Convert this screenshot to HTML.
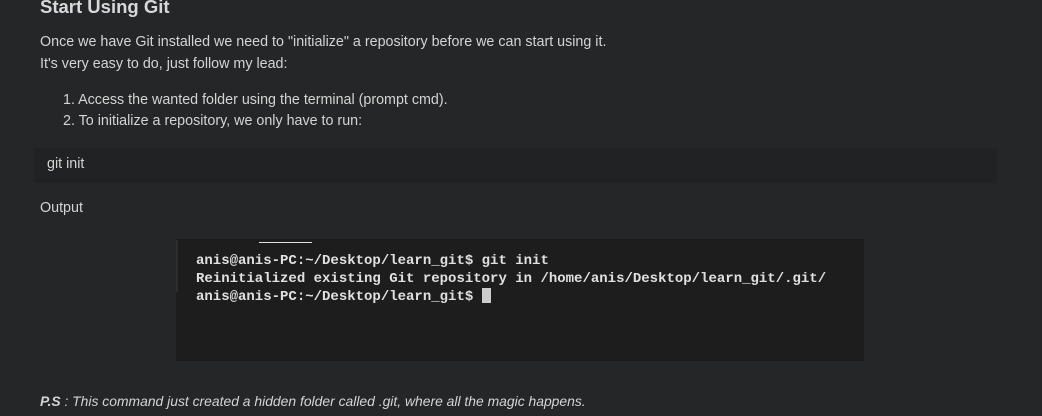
<!DOCTYPE html>
<html><head><style>
body{margin:0;background:#252627;width:1042px;height:416px;overflow:hidden;font-family:"Liberation Sans",sans-serif;color:#d4d4d4;position:relative}
.a{position:absolute;white-space:nowrap;font-size:14.3px}
</style></head><body>
<div class="a" style="left:40px;top:-4px;font-size:18.5px;font-weight:bold;color:#d8d8d8">Start Using Git</div>
<div class="a" style="left:40px;top:34px">Once we have Git installed we need to "initialize" a repository before we can start using it.</div>
<div class="a" style="left:40px;top:56px">It's very easy to do, just follow my lead:</div>
<div class="a" style="left:63px;top:92px">1. Access the wanted folder using the terminal (prompt cmd).</div>
<div class="a" style="left:63px;top:113px">2. To initialize a repository, we only have to run:</div>
<div style="position:absolute;left:34px;top:148px;width:963px;height:35px;background:#212223"></div>
<div class="a" style="left:47px;top:156px">git init</div>
<div class="a" style="left:40px;top:200px">Output</div>
<div style="position:absolute;left:176px;top:239px;width:688px;height:122px;background:#1d1d1e"></div>
<div style="position:absolute;left:176px;top:240px;width:2px;height:52px;background:#2c2c2c"></div>
<div style="position:absolute;left:259px;top:242px;width:53px;height:1px;background:#e0e0e0"></div>
<pre style="position:absolute;left:196px;top:253px;margin:0;font-family:'Liberation Mono',monospace;font-weight:bold;font-size:14px;line-height:17.5px;color:#e0e0e0">anis@anis-PC:~/Desktop/learn_git$ git init
Reinitialized existing Git repository in /home/anis/Desktop/learn_git/.git/
anis@anis-PC:~/Desktop/learn_git$ <span style="display:inline-block;width:9px;height:15px;background:#ccc;vertical-align:-3px"></span></pre>
<div class="a" style="left:40px;top:393px;font-style:italic;font-size:13.9px"><b>P.S</b> : This command just created a hidden folder called .git, where all the magic happens.</div>
</body></html>
